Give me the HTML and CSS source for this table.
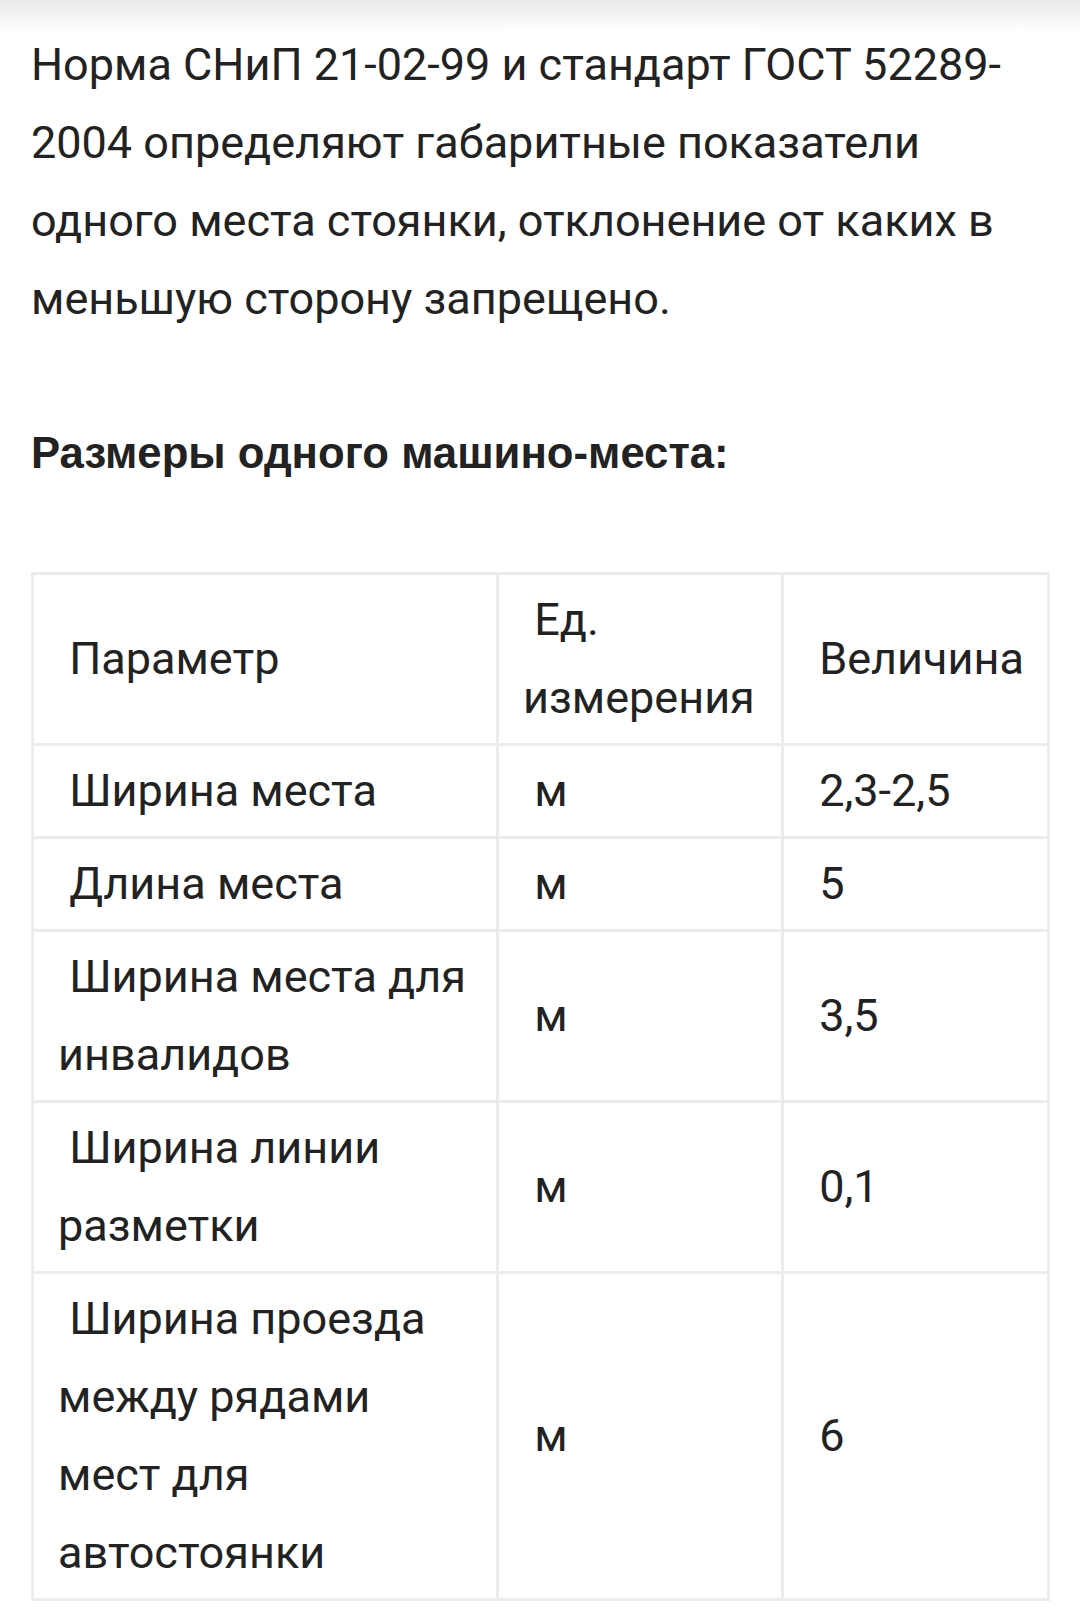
FILE: index.html
```html
<!DOCTYPE html>
<html lang="ru">
<head>
<meta charset="utf-8">
<link rel="stylesheet" href="styles.css">
</head>
<body>
<div class="page">
<p class="lead">Норма СНиП 21-02-99 и стандарт ГОСТ 52289-2004 определяют габаритные показатели одного места стоянки, отклонение от каких в меньшую сторону запрещено.</p>
<h3 class="title">Размеры одного машино-места:</h3>
<table class="specs">
<colgroup><col class="c1"><col class="c2"><col class="c3"></colgroup>
<tr><td>&nbsp;Параметр</td><td>&nbsp;Ед. измерения</td><td>&nbsp;Величина</td></tr>
<tr><td>&nbsp;Ширина места</td><td>&nbsp;м</td><td>&nbsp;2,3-2,5</td></tr>
<tr><td>&nbsp;Длина места</td><td>&nbsp;м</td><td>&nbsp;5</td></tr>
<tr><td>&nbsp;Ширина места для инвалидов</td><td>&nbsp;м</td><td>&nbsp;3,5</td></tr>
<tr><td>&nbsp;Ширина линии разметки</td><td>&nbsp;м</td><td>&nbsp;0,1</td></tr>
<tr><td>&nbsp;Ширина проезда между рядами мест для автостоянки</td><td>&nbsp;м</td><td>&nbsp;6</td></tr>
</table>
</div>
</body>
</html>
```
FILE: styles.css
```css
html, body {
  margin: 0;
  padding: 0;
}
body {
  background: linear-gradient(#e9e9e9, #ffffff 32px) no-repeat, #ffffff;
  color: #222222;
  font-family: Roboto, "Noto Sans", sans-serif;
}
.page {
  padding: 26px 30px 0 31px;
}
.lead {
  margin: 0;
  font-size: 45px;
  line-height: 78px;
}
.title {
  margin: 76px 0 0 0;
  font-family: "Liberation Sans", Arial, sans-serif;
  font-weight: bold;
  font-size: 43.7px;
  line-height: 78px;
}
.specs {
  margin-top: 80px;
  width: 1016px;
  border-collapse: collapse;
  table-layout: fixed;
  font-size: 45px;
  line-height: 78px;
  border: 3px solid #ececec;
}
.c1 { width: 465px; }
.c2 { width: 285px; }
.c3 { width: 266px; }
.specs td {
  border: 3px solid #ececec;
  padding: 6px 18px 6px 24px;
  vertical-align: middle;
}
```
